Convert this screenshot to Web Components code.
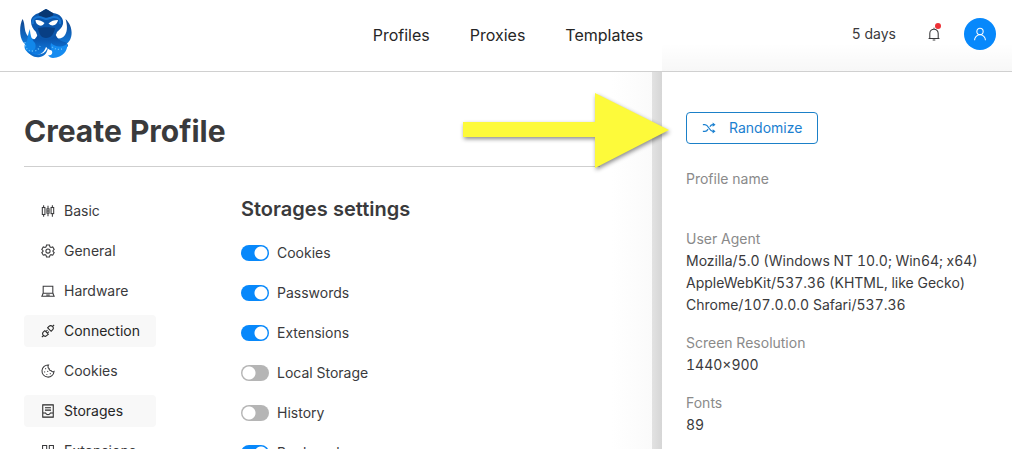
<!DOCTYPE html>
<html lang="en">
<head>
<meta charset="UTF-8">
<meta name="viewport" content="width=device-width, initial-scale=1.0">
<title>Create Profile</title>
<style>
    body {
        margin: 0;
        background: #fff;
        color: #3a3a3c;
        font: 14px/22px Inter, "Open Sans", sans-serif;
        font-variant-numeric: tabular-nums;
    }
</style>
</head>
<body>
<profile-app></profile-app>

<script>
const icons = {
    sliders: '<rect x="1.5" y="4" width="3" height="8"/><path d="M3 1.5V4M3 12v2.5M8 2v3.5M8 10.5V14"/><rect x="6.8" y="5.5" width="2.4" height="5"/><path d="M6.8 8h2.4"/><rect x="11.5" y="4" width="3" height="7"/><path d="M13 1.5V4M13 11v3.5"/>',
    setting: '<path d="M6.3 1.2h3.4l.5 2 1.2.7 2-.6 1.7 2.9L13.7 7.6v.9l1.4 1.3-1.7 3-2-.6-1.2.7-.5 2H6.3l-.5-2-1.2-.7-2 .6-1.7-3 1.4-1.3v-.9L.9 6.2l1.7-2.9 2 .6 1.2-.7z"/><circle cx="8" cy="8" r="2.4"/>',
    laptop: '<path d="M2.5 2.5h11v8h-11z"/><path d="M2.5 10.5 1 14h14l-1.5-3.5M6 12.6h4"/>',
    api: '<path d="m7.6 4.4 4 4 1.5-1.6a2.8 2.8 0 0 0-4-4zM4.4 7.6l4 4-1.6 1.5a2.8 2.8 0 0 1-4-4zM13.1 2.9 15 1M2.9 13.1 1 15M5.6 8.8l1.8-1.8M7.2 10.4l1.8-1.8"/>',
    cookie: '<path d="M8.6 1.2a6.9 6.9 0 1 0 6.3 7.4c-1.2.7-2.6.3-3.1-.9-1.5.2-2.7-1-2.5-2.5-1.4-.6-1.7-2.5-.7-4z"/><path stroke-width="1.3" stroke-linecap="round" d="M5.3 5.3h.01M4.2 9h.01M7.7 8.5h.01M6.7 12h.01M10.6 11h.01"/>',
    container: '<path d="M2 1h12v14H2zM4.6 4.2h6.8M4.6 7h6.8M2 10.2h3.2c.3 1.3 1.4 2 2.8 2s2.5-.7 2.8-2H14"/>',
    appstore: '<path d="M1.8 1.8h4.7v4.7H1.8zM9.5 1.8h4.7v4.7H9.5zM1.8 9.5h4.7v4.7H1.8zM9.5 9.5h4.7v4.7H9.5z"/>',
    shuffle: '<path stroke-width="1.4" d="M1 4.2h2.4c4.4 0 4.6 7.6 9 7.6h1M1 11.8h2.4c1.8 0 2.8-1.2 3.5-2.5M9 6.5c.8-1.4 1.7-2.3 3.4-2.3h1"/><path fill="currentColor" stroke="none" d="m12.2 1.8 3.3 2.4-3.3 2.4zM12.2 9.4l3.3 2.4-3.3 2.4z"/>',
    bell: '<path d="M1.8 13.2h12.4M3.2 13V7.3a4.8 4.8 0 0 1 9.6 0V13M8 2.4V.8M6.5 14.8h3"/>',
    user: '<circle cx="8" cy="5" r="3.6"/><path d="M1.8 15a6.2 6.2 0 0 1 12.4 0"/>'
};

class UiIcon extends HTMLElement {
    connectedCallback() {
        this.attachShadow({ mode: 'open' });
        this.shadowRoot.innerHTML = `
            <style>
                :host {
                    display: block;
                    flex: none;
                    width: 14px;
                    height: 14px;
                }

                svg {
                    display: block;
                    width: 100%;
                    height: 100%;
                    fill: none;
                    stroke: currentColor;
                    stroke-width: 1.2;
                }
            </style>
            <svg viewBox="0 0 16 16" aria-hidden="true">${icons[this.getAttribute('name')]}</svg>
        `;
    }
}

class OctopusLogo extends HTMLElement {
    connectedCallback() {
        this.attachShadow({ mode: 'open' });
        this.shadowRoot.innerHTML = `
            <style>
                :host { display: block; }
                svg { display: block; width: 52px; height: 50px; }
            </style>
            <svg viewBox="0 0 52 50" aria-hidden="true">
                <defs>
                    <linearGradient id="arm" x1="0" y1="0" x2="0" y2="1">
                        <stop offset="0" stop-color="#12458c"/>
                        <stop offset="1" stop-color="#0f7ce0"/>
                    </linearGradient>
                    <linearGradient id="body" x1="0" y1="0" x2="0" y2="1">
                        <stop offset="0" stop-color="#0a4390"/>
                        <stop offset=".4" stop-color="#0b5ab4"/>
                        <stop offset="1" stop-color="#0f80e8"/>
                    </linearGradient>
                </defs>
                <!-- outer arms -->
                <path fill="url(#arm)" d="M2.5 10C-.5 16-1 27 3 33c3 4 8 5 13 3l3-6c-6 1-11-1-13-6C4 19 5 14 2.500 10z"/>
                <path fill="url(#arm)" d="M45.500 10c2 6 2 12-.5 16-2 3-5 4-9 3l1 7c5 2 10 0 13-5 3-6 2-15-4.500-21z"/>
                <!-- body and lower arms -->
                <path fill="url(#body)" d="M19 22 34 22c2 6 5 10 11 11 2 1 3 2 3 4-3 5-9 7-15 5-3-1-5-2-7-4-2 6-7 9-13 8-5-1-8-4-7-9 1-3 3-4 6-5 4-2 6-6 7-10z"/>
                <path fill="#1187ea" d="M10 20c0 6 2 11 5 14 2 5-1 9-6 9-5-1-6-7-2-11 1-4 1-8 3-12z"/>
                <path fill="#0d6ccb" d="M8 41c3 4 8 6 13 4 4-1 6-4 7-8 0 6-3 10-8 11-6 1-11-2-12-7z"/>
                <path fill="#158bf0" d="M31 34c4 4 10 5 16 1 1 7-4 13-14 14-2 0-4-1-5-3 3 1 5-1 4-4-1-3-2-5-1-8z"/>
                <!-- head -->
                <path fill="#0b57ad" d="M26 0c3 1 4 3 7 4 7 1 11 5 10 11-1 4-4 6-6 8-1 4-5 8-11 8s-9-4-10-8c-3-3-5-6-5-11 0-4 4-7 8-8 3-1 4-3 7-4z"/>
                <path fill="#083873" d="M26 0c3 1 4 3 7 4 1 1 0 3-2 4-4 1-7 1-10 0-2-1-3-3-2-4 3-1 4-3 7-4z"/>
                <path fill="#083f84" d="M18 19c5-1 12-1 17 0-1 6-4 10-9 10s-7-4-8-10z"/>
                <path fill="none" stroke="#1675d3" stroke-width="2" d="M13 15c-1-5 2-7 6-7 3 0 5 2 7 2 3 0 5-2 8-2 5 0 7 3 6 7"/>
                <path fill="#fff" d="M15.500 11c3-.5 6 .5 9 3-1 2-3 3-5 2.500s-4-2.500-4-5.500zM38 11c-4 0-7 1-9.500 3.500 2 2 4 2.500 6 1.500s3-2.500 3.500-5z"/>
                <path fill="none" stroke="#63bdf8" stroke-width="1.400" stroke-dasharray="1.200 2" d="M5 33c0 6 3 10 8 9 4 0 6-2 7-5M32 38c3 2 6 3 10 2"/>
            </svg>
        `;
    }
}

class AppHeader extends HTMLElement {
    connectedCallback() {
        this.attachShadow({ mode: 'open' });
        this.shadowRoot.innerHTML = `
            <style>
                :host {
                    display: grid;
                    grid-template-columns: 1fr auto 1fr;
                    align-items: center;
                    height: 67px;
                    padding: 0 16px 4px 20px;
                    border-bottom: 1px solid #d0d0d0;
                    background: linear-gradient(rgba(0, 0, 0, 0), rgba(0, 0, 0, 0.03)) right bottom / 350px 28px no-repeat;
                }

                a { color: inherit; text-decoration: none; }

                nav {
                    display: flex;
                    gap: 40px;
                    font-size: 16px;
                    line-height: 24px;
                    color: #262626;
                    padding-top: 3px;
                }

                .actions {
                    display: flex;
                    align-items: center;
                    justify-content: flex-end;
                }

                button {
                    display: flex;
                    align-items: center;
                    justify-content: center;
                    padding: 0;
                    border: 0;
                    background: none;
                    color: inherit;
                }

                .bell { position: relative; margin: 0 23px 0 31px; }

                .dot {
                    position: absolute;
                    top: -4px;
                    right: 0;
                    width: 6px;
                    height: 6px;
                    border-radius: 50%;
                    background: #ed3237;
                }

                .avatar {
                    width: 32px;
                    height: 32px;
                    border-radius: 50%;
                    background: #0788fb;
                    color: #fff;
                }
            </style>
            <a href="#" aria-label="Home"><octopus-logo></octopus-logo></a>
            <nav>
                <a href="#">Profiles</a>
                <a href="#">Proxies</a>
                <a href="#">Templates</a>
            </nav>
            <div class="actions">
                <span>5 days</span>
                <button class="bell" aria-label="Notifications"><ui-icon name="bell"></ui-icon><span class="dot"></span></button>
                <button class="avatar" aria-label="Account"><ui-icon name="user"></ui-icon></button>
            </div>
        `;
    }
}

class TabItem extends HTMLElement {
    connectedCallback() {
        this.attachShadow({ mode: 'open' });
        this.shadowRoot.innerHTML = `
            <style>
                :host { display: block; }

                button {
                    display: flex;
                    align-items: center;
                    gap: 9px;
                    width: 100%;
                    height: 32px;
                    padding: 0 16px 0 17px;
                    border: 0;
                    border-radius: 4px;
                    background: none;
                    color: inherit;
                    font: inherit;
                    cursor: pointer;
                }

                :host([active]) button { background: #f8f8f8; color: #262626; }
            </style>
            <button><ui-icon name="${this.getAttribute('icon')}"></ui-icon><slot></slot></button>
        `;
    }
}

class SwitchRow extends HTMLElement {
    connectedCallback() {
        this.attachShadow({ mode: 'open' });
        this.shadowRoot.innerHTML = `
            <style>
                :host { display: block; }

                label {
                    display: flex;
                    align-items: center;
                    gap: 8px;
                    height: 32px;
                }

                input {
                    appearance: none;
                    width: 28px;
                    height: 16px;
                    margin: 0;
                    border-radius: 8px;
                    background: radial-gradient(circle at 8px 8px, #fff 6px, #b5b5b5 7px);
                }

                input:checked { background: radial-gradient(circle at 20px 8px, #fff 6px, #0788fb 7px); }
            </style>
            <label><input type="checkbox" role="switch" ${this.hasAttribute('on') ? 'checked' : ''}><slot></slot></label>
        `;
    }
}

class ProfileForm extends HTMLElement {
    connectedCallback() {
        this.attachShadow({ mode: 'open' });
        this.shadowRoot.innerHTML = `
            <style>
                :host {
                    display: block;
                    padding: 40px 62px 0 24px;
                    overflow: hidden;
                    background:
                        linear-gradient(to right, #e2e2e2, #d6d6d6) right / 10px 100% no-repeat,
                        linear-gradient(to left, #f9f9f9, #fff) right / 50px 100% no-repeat;
                }

                h1 {
                    margin: 0 0 28px;
                    padding-bottom: 16px;
                    border-bottom: 1px solid #cfcfcf;
                    font-size: 30px;
                    line-height: 38px;
                }

                .columns {
                    display: grid;
                    grid-template-columns: 132px 1fr;
                    gap: 85px;
                }

                .tabs {
                    display: grid;
                    grid-template-columns: 100%;
                    gap: 8px;
                    align-content: start;
                }

                h2 {
                    margin: 0 0 14px;
                    font-size: 20px;
                    line-height: 28px;
                    font-weight: 600;
                }

                .switches { display: grid; gap: 8px; }
            </style>
            <h1>Create Profile</h1>
            <div class="columns">
                <nav class="tabs">
                    <tab-item icon="sliders">Basic</tab-item>
                    <tab-item icon="setting">General</tab-item>
                    <tab-item icon="laptop">Hardware</tab-item>
                    <tab-item icon="api" active>Connection</tab-item>
                    <tab-item icon="cookie">Cookies</tab-item>
                    <tab-item icon="container" active>Storages</tab-item>
                    <tab-item icon="appstore">Extensions</tab-item>
                </nav>
                <section>
                    <h2>Storages settings</h2>
                    <div class="switches">
                        <switch-row on>Cookies</switch-row>
                        <switch-row on>Passwords</switch-row>
                        <switch-row on>Extensions</switch-row>
                        <switch-row>Local Storage</switch-row>
                        <switch-row>History</switch-row>
                        <switch-row on>Bookmarks</switch-row>
                    </div>
                </section>
            </div>
        `;
    }
}

class ProfileSummary extends HTMLElement {
    connectedCallback() {
        this.attachShadow({ mode: 'open' });
        this.shadowRoot.innerHTML = `
            <style>
                :host {
                    display: block;
                    padding: 40px 24px 0;
                    background: #fff;
                }

                button {
                    display: flex;
                    align-items: center;
                    gap: 13px;
                    height: 32px;
                    padding: 0 15px;
                    border: 1px solid #1b80c8;
                    border-radius: 4px;
                    background: #fff;
                    color: #1b80d0;
                    font: inherit;
                }

                dl { margin: 24px 0 0; }
                dt { color: #8a8a8a; }
                dd { margin: 0 0 16px; min-height: 22px; }
            </style>
            <button><ui-icon name="shuffle"></ui-icon>Randomize</button>
            <dl>
                <dt>Profile name</dt>
                <dd></dd>
                <dt>User Agent</dt>
                <dd>Mozilla/5.0 (Windows NT 10.0; Win64; x64) AppleWebKit/537.36 (KHTML, like Gecko) Chrome/107.0.0.0 Safari/537.36</dd>
                <dt>Screen Resolution</dt>
                <dd>1440×900</dd>
                <dt>Fonts</dt>
                <dd>89</dd>
            </dl>
        `;
    }
}

class PointerArrow extends HTMLElement {
    connectedCallback() {
        this.attachShadow({ mode: 'open' });
        this.shadowRoot.innerHTML = `
            <style>
                :host { display: block; pointer-events: none; }
                svg {
                    display: block;
                    width: 206px;
                    height: 75px;
                    overflow: visible;
                    filter: drop-shadow(1px 2px 2px rgba(0, 0, 0, 0.45));
                }
            </style>
            <svg viewBox="0 0 206 75" aria-hidden="true"><path fill="#fdfa3a" d="M0 29h132V0l74 37-74 38V44H0z"/></svg>
        `;
    }
}

class ProfileApp extends HTMLElement {
    connectedCallback() {
        this.attachShadow({ mode: 'open' });
        this.shadowRoot.innerHTML = `
            <style>
                :host {
                    display: flex;
                    flex-direction: column;
                    height: 100vh;
                    overflow: hidden;
                }

                app-header { flex: none; }

                main {
                    display: grid;
                    grid-template-columns: 1fr 350px;
                    flex: 1;
                    min-height: 0;
                    position: relative;
                }

                profile-form, profile-summary { min-height: 0; }

                pointer-arrow {
                    position: absolute;
                    top: 21px;
                    right: 343px;
                }
            </style>
            <app-header></app-header>
            <main>
                <profile-form></profile-form>
                <profile-summary></profile-summary>
                <pointer-arrow></pointer-arrow>
            </main>
        `;
    }
}

customElements.define('ui-icon', UiIcon);
customElements.define('octopus-logo', OctopusLogo);
customElements.define('app-header', AppHeader);
customElements.define('tab-item', TabItem);
customElements.define('switch-row', SwitchRow);
customElements.define('profile-form', ProfileForm);
customElements.define('profile-summary', ProfileSummary);
customElements.define('pointer-arrow', PointerArrow);
customElements.define('profile-app', ProfileApp);
</script>
</body>
</html>
